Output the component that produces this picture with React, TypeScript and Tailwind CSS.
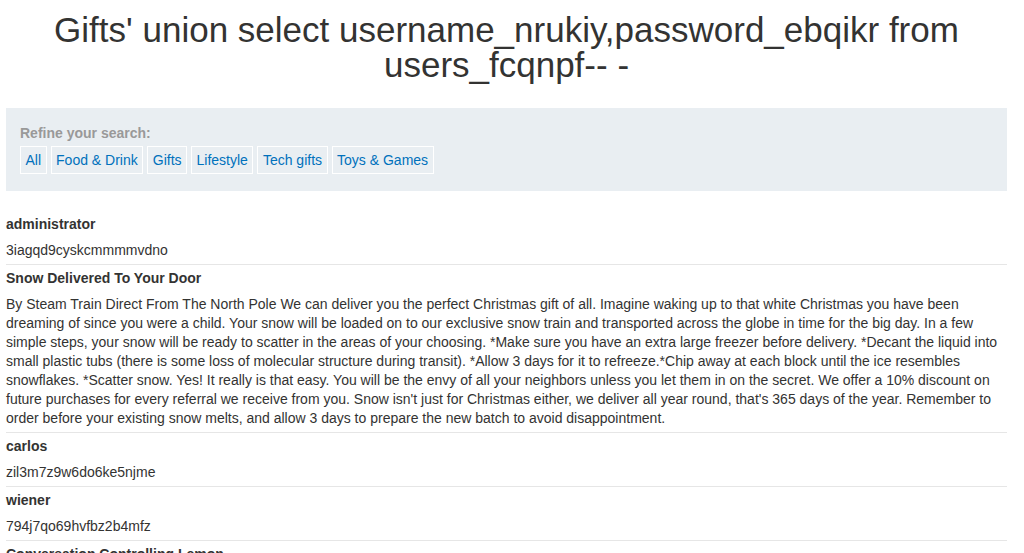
const categories = ["All", "Food & Drink", "Gifts", "Lifestyle", "Tech gifts", "Toys & Games"];

const rows: { head: string; body: string }[] = [
  { head: "administrator", body: "3iagqd9cyskcmmmmvdno" },
  {
    head: "Snow Delivered To Your Door",
    body: "By Steam Train Direct From The North Pole We can deliver you the perfect Christmas gift of all. Imagine waking up to that white Christmas you have been dreaming of since you were a child. Your snow will be loaded on to our exclusive snow train and transported across the globe in time for the big day. In a few simple steps, your snow will be ready to scatter in the areas of your choosing. *Make sure you have an extra large freezer before delivery. *Decant the liquid into small plastic tubs (there is some loss of molecular structure during transit). *Allow 3 days for it to refreeze.*Chip away at each block until the ice resembles snowflakes. *Scatter snow. Yes! It really is that easy. You will be the envy of all your neighbors unless you let them in on the secret. We offer a 10% discount on future purchases for every referral we receive from you. Snow isn't just for Christmas either, we deliver all year round, that's 365 days of the year. Remember to order before your existing snow melts, and allow 3 days to prepare the new batch to avoid disappointment.",
  },
  { head: "carlos", body: "zil3m7z9w6do6ke5njme" },
  { head: "wiener", body: "794j7qo69hvfbz2b4mfz" },
  { head: "Conversation Controlling Lemon", body: "" },
];

export default function App() {
  return (
    <div className="min-h-screen bg-white font-['Liberation_Sans',Arial,sans-serif] text-[#333332]">
      <div className="ml-[6px] mr-[17px] pb-10">
        <h1 className="pt-[12px] text-center text-[35px] leading-[35px] font-normal">
          Gifts' union select username_nrukiy,password_ebqikr from users_fcqnpf-- -
        </h1>

        <section className="mt-[26px] bg-[#e9eef2] px-[14px] pt-[17px] pb-[17px]">
          <p className="text-[14px] leading-[17px] font-bold text-[#999999]">Refine your search:</p>
          <div className="mt-[4px] flex gap-[4px]">
            {categories.map((c) => (
              <a
                key={c}
                href="#"
                className="border border-white px-[4.5px] text-[14px] leading-[26px] text-[#0071bc]"
              >
                {c}
              </a>
            ))}
          </div>
        </section>

        <table className="mt-[20px] w-full border-collapse text-[14px] leading-[19px]">
          <tbody>
            {rows.map((r) => (
              <>
                <tr key={r.head + "h"} className="border-t border-[#e6e6e6] first:border-t-0">
                  <th className="py-[3.5px] text-left font-bold">{r.head}</th>
                </tr>
                {r.body && (
                  <tr key={r.head + "b"}>
                    <td className="py-[4px]">{r.body}</td>
                  </tr>
                )}
              </>
            ))}
          </tbody>
        </table>
      </div>
    </div>
  );
}
